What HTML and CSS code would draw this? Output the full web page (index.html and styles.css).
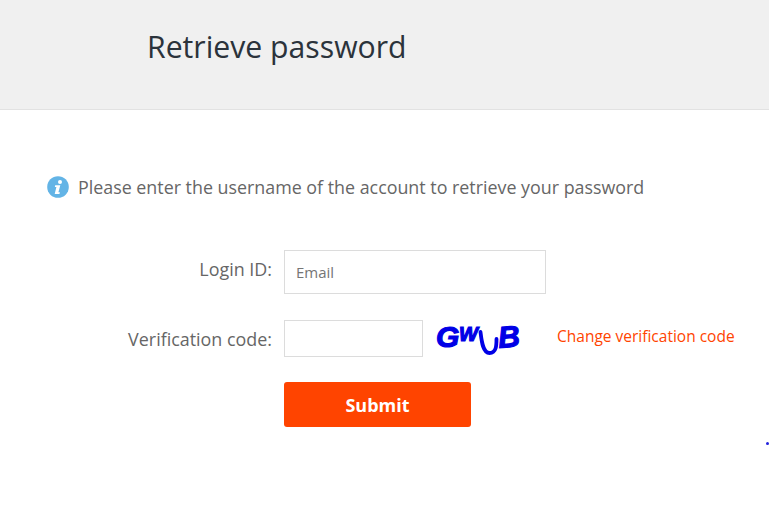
FILE: index.html
```html
<!DOCTYPE html>
<html lang="en">
<head>
    <meta charset="UTF-8">
    <meta name="viewport" content="width=device-width, initial-scale=1.0">
    <title>Retrieve password</title>
    <link rel="stylesheet" href="styles.css">
</head>
<body>
    <header class="page-header">
        <h1>Retrieve password</h1>
    </header>

    <main class="content">
        <div class="notice">
            <svg class="notice-icon" viewBox="0 0 22 22" width="22" height="22">
                <circle cx="11" cy="11" r="10.8" fill="#63b4e6"/>
                <circle cx="13" cy="5.900" r="2" fill="#fff"/>
                <path d="M8.200 9.300h5.100l-1.900 6.900h1.500l-.5 1.800H7.700l1.700-7H7.800z" fill="#fff"/>
            </svg>
            <span>Please enter the username of the account to retrieve your password</span>
        </div>

        <form class="form">
            <div class="form-row row-login">
                <label class="label-login" for="loginId">Login ID:</label>
                <input class="field field-wide" type="text" id="loginId" placeholder="Email">
            </div>
            <div class="form-row row-code">
                <label for="code">Verification code:</label>
                <input class="field field-code" type="text" id="code">
                <svg class="captcha" viewBox="0 0 86 37" width="86" height="37">
                    <text class="captcha-char" x="1" y="27" font-size="30">G</text>
                    <text class="captcha-char" x="24" y="21" font-size="20">W</text>
                    <path d="M45.500 12c1 8 2 21 9 21s7-8 7-14" fill="none" stroke="#0000e6" stroke-width="3.800" stroke-linecap="round"/>
                    <text class="captcha-char" x="63" y="27" font-size="30" transform="rotate(-5 74 15)">B</text>
                </svg>
                <a class="change-link" href="#">Change verification code</a>
            </div>
            <button class="submit" type="button">Submit</button>
        </form>
    </main>

    <span class="stray-dot"></span>
</body>
</html>
```

FILE: styles.css
```css
body {
    margin: 0;
    background-color: #fff;
    color: #666;
    font-family: "Open Sans", "Noto Sans", Arial, sans-serif;
    overflow: hidden;
}

.page-header {
    height: 109px;
    padding-left: 147px;
    background-color: #f0f0f0;
    border-bottom: 1px solid #e2e2e2;
    display: flex;
    align-items: center;
}

.page-header h1 {
    margin: 0 0 17px;
    font-size: 30.2px;
    font-weight: 400;
    color: #2b333b;
}

.content {
    padding-top: 66px;
}

.notice {
    display: flex;
    align-items: center;
    gap: 9px;
    padding-left: 47px;
    font-size: 17.85px;
    height: 22px;
}

.form {
    margin-top: 52px;
}

.form-row {
    display: flex;
    align-items: center;
}

.row-login {
    height: 44px;
}

.row-code {
    height: 37px;
    margin-top: 26px;
}

label {
    width: 272px;
    text-align: right;
    font-size: 17.9px;
    flex: none;
}

.label-login {
    margin-bottom: 6px;
}

.field {
    box-sizing: border-box;
    margin-left: 12px;
    border: 1px solid #dcdcdc;
    background-color: #fff;
    font-family: inherit;
    font-size: 15px;
    color: #666;
    padding: 0 11px;
    outline: none;
}

.field::placeholder {
    color: #757575;
    opacity: 1;
}

.field-wide {
    width: 262px;
    height: 44px;
}

.field-code {
    width: 139px;
    height: 37px;
}

.captcha {
    margin-left: 12px;
    flex: none;
    overflow: visible;
}

.captcha-char {
    font-family: "Liberation Sans", Arial, sans-serif;
    font-style: italic;
    font-weight: 700;
    fill: #0000e6;
    stroke: #0000e6;
    stroke-width: 1.2px;
}

.change-link {
    margin: 0 0 6px 36px;
    color: #ff4400;
    font-size: 15.5px;
    text-decoration: none;
    white-space: nowrap;
}

.submit {
    display: block;
    width: 187px;
    height: 45px;
    margin: 25px 0 0 284px;
    border: 0;
    border-radius: 3px;
    background-color: #ff4400;
    color: #fff;
    font-family: inherit;
    font-size: 18px;
    font-weight: 700;
}

.stray-dot {
    position: absolute;
    left: 766px;
    top: 442px;
    width: 3px;
    height: 3px;
    background-color: #2222dd;
    border-radius: 50%;
}
```
